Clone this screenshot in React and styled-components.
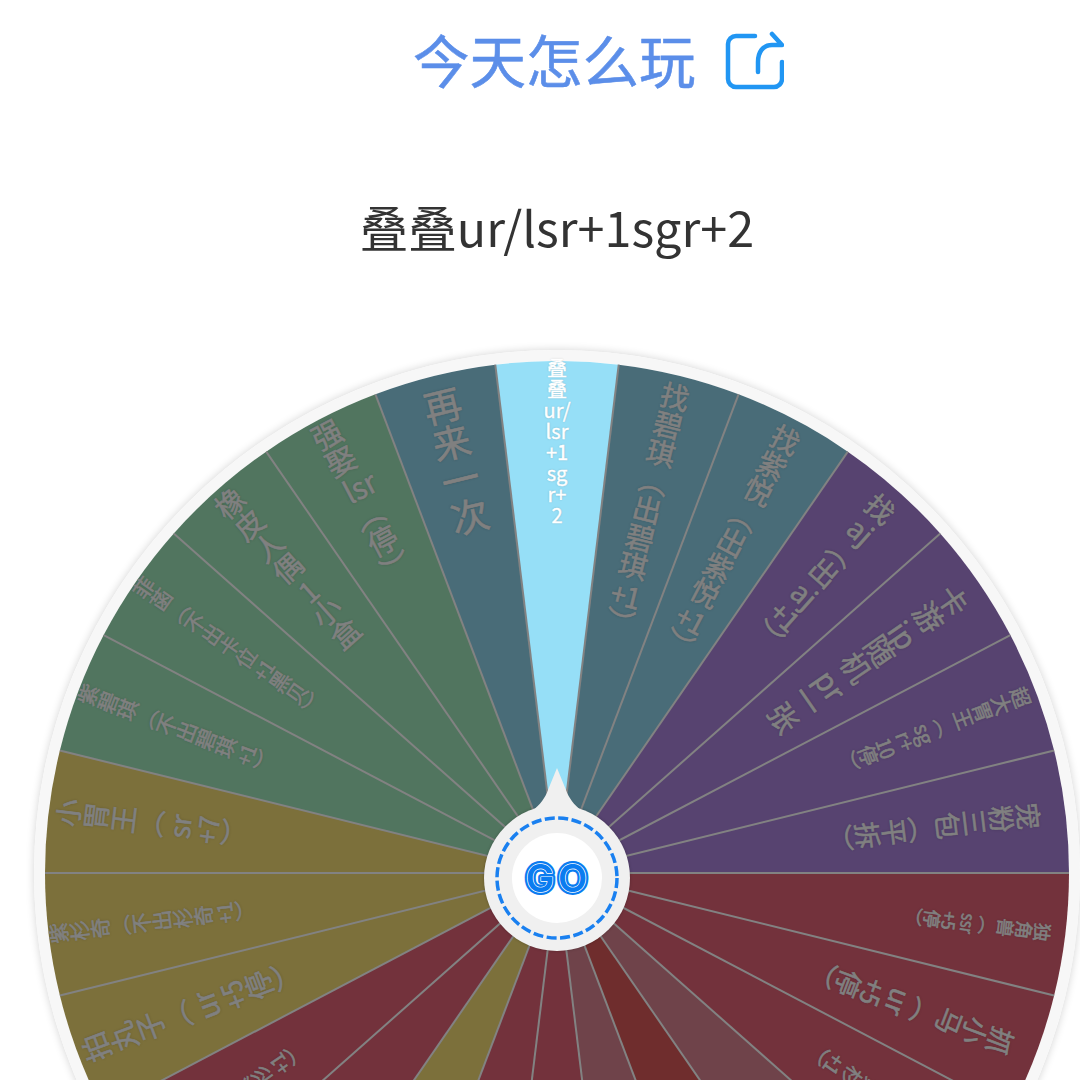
import React from 'react'
import styled, {createGlobalStyle} from 'styled-components'

const R = 512;

const PURPLE = '#574370';
const TEAL = '#496c78';
const GREEN = '#51755f';
const OLIVE = '#7c703b';
const RED = '#73323c';
const ROSE = '#6f434a';
const BRICK = '#6f2d2d';

// clockwise from the top, slice 0 is the one the pointer is on
// {..} in a text is a latin group that stands upright in the column
const slices = [
  {color: '#96dff7', text: '叠\n叠\nur/\nlsr\n+1\nsg\nr+\n2', size: 20, inset: -4},
  {color: TEAL, text: '找碧琪（出碧琪{+1}）', size: 29, inset: 7},
  {color: TEAL, text: '找紫悦（出紫悦{+1}）', size: 28.8, inset: 8},
  {color: PURPLE, text: '找{aj}（出{aj}{+1}）', size: 28.3, inset: 11},
  {color: PURPLE, text: '卡游{ip}随机{pr}一张', size: 29.4, inset: 17},
  {color: PURPLE, text: '超大胃王（{sg}{r+}{10}停）', size: 20.4, inset: 6},
  {color: PURPLE, text: '宠粉三包（平拆）', size: 27, inset: 24},
  {color: RED, text: '独角兽（{ssr}{+5}停）', size: 18.5, inset: 14},
  {color: RED, text: '抓小马（{ur}{+5}停）', size: 27, inset: 25},
  {color: RED, text: '找紫杉（不出紫杉{+1}）', size: 20.5, inset: 0},
  {color: ROSE},
  {color: BRICK},
  {color: ROSE},
  {color: RED},
  {color: RED},
  {color: OLIVE},
  {color: RED},
  {color: RED, text: '找紫杉（不出紫杉{+1}）', size: 20.5, inset: 0},
  {color: OLIVE, text: '拍丸子（{ur}{+5}停）', size: 29, inset: 5},
  {color: OLIVE, text: '紫杉奇（不出杉奇{+1}）', size: 20.8, inset: 0},
  {color: OLIVE, text: '小胃王（{sr}{+7}）', size: 27.8, inset: 6},
  {color: GREEN, text: '紫碧琪（不出碧琪{+1}）', size: 21, inset: 0},
  {color: GREEN, text: '菲菡（不出卡位{+1}黑贝）', size: 20.6, inset: 0},
  {color: GREEN, text: '橡皮人偶{1}小盒', size: 29, inset: 4},
  {color: GREEN, text: '强娶{lsr}（停）', size: 30, inset: 2},
  {color: TEAL, text: '再来一次', size: 38, inset: 12},
];

const STEP = 360 / slices.length;

const GlobalStyle = createGlobalStyle`
  html, body {
    margin: 0;
    height: 100%;
    overflow: hidden;
    background-color: white;
  }
`;

const StyledPage = styled.div`
  width: 1114px;
  height: 1080px;
  overflow: hidden;
  display: flex;
  flex-direction: column;
  font-family: "Noto Sans CJK SC", "Noto Sans", sans-serif;
`;

const StyledHeader = styled.div`
  display: flex;
  align-items: center;
  gap: 28px;
  padding: 18px 0 0 413px;
`;

const StyledHeading = styled.h1`
  margin: 0;
  padding-bottom: 4px;
  font-size: 56.5px;
  line-height: 80px;
  font-weight: 400;
  color: #5b8ee9;
  -webkit-text-stroke: 0.6px #5b8ee9;
`;

const StyledTitle = styled.div`
  margin-top: 92px;
  text-align: center;
  font-size: 48.5px;
  line-height: 64px;
  color: #333;
`;

const StyledWheel = styled.div`
  position: relative;
  flex: none;
  width: 1024px;
  height: 1024px;
  margin: 92px 0 0 34px;
  border: 11px solid #f7f7f7;
  border-radius: 50%;
  box-shadow: 0 0 8px rgba(0, 0, 0, 0.18);
`;

const StyledDisc = styled.svg`
  display: block;
  width: 1024px;
  height: 1024px;
`;

const StyledLabel = styled.div`
  position: absolute;
  left: 50%;
  top: ${props => props.$inset}px;
  transform: translateX(-50%) rotate(${props => props.$angle}deg);
  transform-origin: 50% ${props => R - props.$inset}px;
  font-size: ${props => props.$size}px;
  line-height: 1;
  white-space: nowrap;
  color: #808080;
  -webkit-text-stroke: 0.6px #808080;
  text-shadow: 0 0 3px rgba(0, 0, 0, 0.2);
  writing-mode: vertical-rl;
`;

const StyledUpright = styled.span`
  text-combine-upright: all;
`;

const StyledActiveLabel = styled(StyledLabel)`
  writing-mode: horizontal-tb;
  white-space: pre-line;
  text-align: center;
  line-height: 21px;
  color: white;
  -webkit-text-stroke: 0.4px white;
  text-shadow: 0 0 2px rgba(0, 0, 0, 0.25);
`;

const StyledPointer = styled.svg`
  position: absolute;
  left: 482px;
  top: 407px;
  width: 60px;
  height: 48px;
`;

const StyledHub = styled.div`
  position: absolute;
  left: 439px;
  top: 444px;
  width: 146px;
  height: 146px;
  display: flex;
  align-items: center;
  justify-content: center;
  border-radius: 50%;
  background-color: #f0f0f0;
  box-shadow: 0 0 3px rgba(0, 0, 0, 0.25);
`;

const StyledDashes = styled.svg`
  position: absolute;
  inset: 0;
  width: 146px;
  height: 146px;
`;

const StyledGoButton = styled.div`
  position: relative;
  width: 90px;
  height: 90px;
  border-radius: 50%;
  background-color: white;
  display: flex;
  align-items: center;
  justify-content: center;
`;

const StyledGo = styled.svg`
  display: block;
  width: 80px;
  height: 44px;
  font-family: Inter, "Liberation Sans", sans-serif;
  font-size: 38px;
  font-weight: 600;
`;

const slicePath = (index) => {
  const from = (index - 0.5) * STEP * Math.PI / 180;
  const to = (index + 0.5) * STEP * Math.PI / 180;
  const point = a => `${R + R * Math.sin(a)} ${R - R * Math.cos(a)}`;
  return `M${R} ${R}L${point(from)}A${R} ${R} 0 0 1 ${point(to)}Z`;
};

const spokeEnd = (index) => {
  const a = (index - 0.5) * STEP * Math.PI / 180;
  return {x2: R + R * Math.sin(a), y2: R - R * Math.cos(a)};
};

const labelParts = (text) => text.split(/\{(.+?)\}/).map((part, i) => (
  i % 2 ? <StyledUpright key={i}>{part}</StyledUpright> : part
));

const ShareIcon = () => (
  <svg width="60" height="60" viewBox="0 0 60 60" fill="none" stroke="#2196f3" strokeWidth="4.5" strokeLinecap="round" strokeLinejoin="round">
    <path d="M31 6H12a8 8 0 0 0-8 8v35a8 8 0 0 0 8 8h38a8 8 0 0 0 8-8V32"/>
    <path d="M34 42V32c0-10 5-17 14-17h10L48 4"/>
  </svg>
);

const App = () => (
  <StyledPage>
    <GlobalStyle/>
    <StyledHeader>
      <StyledHeading>今天怎么玩</StyledHeading>
      <ShareIcon/>
    </StyledHeader>
    <StyledTitle>叠叠ur/lsr+1sgr+2</StyledTitle>
    <StyledWheel>
      <StyledDisc viewBox="0 0 1024 1024">
        {slices.map((slice, i) => (
          <path key={i} d={slicePath(i)} fill={slice.color}/>
        ))}
        {slices.map((slice, i) => (
          <line key={i} x1={R} y1={R} {...spokeEnd(i)} stroke="#828282" strokeWidth="2"/>
        ))}
      </StyledDisc>
      {slices.map((slice, i) => {
        if (!slice.text) return null;
        const Label = i === 0 ? StyledActiveLabel : StyledLabel;
        return (
          <Label key={i} $angle={i * STEP} $size={slice.size} $inset={slice.inset}>
            {labelParts(slice.text)}
          </Label>
        );
      })}
      <StyledHub>
        <StyledDashes viewBox="0 0 146 146">
          <circle cx="73" cy="73" r="60" fill="none" stroke="#1a80f0" strokeWidth="3.5" strokeDasharray="10 3.5"/>
        </StyledDashes>
        <StyledGoButton>
          <StyledGo viewBox="0 0 80 44">
            <defs>
              <text id="go-word" x="41.5" y="36" textAnchor="middle" letterSpacing="4">GO</text>
            </defs>
            <use href="#go-word" fill="#0a7cf0" stroke="#0a7cf0" strokeWidth="6" strokeLinejoin="round"/>
            <use href="#go-word" fill="white" stroke="white" strokeWidth="1.4" strokeLinejoin="round"/>
            <use href="#go-word" fill="#0a7cf0"/>
          </StyledGo>
        </StyledGoButton>
      </StyledHub>
      <StyledPointer viewBox="0 0 60 48">
        <path d="M30 0L21 22C18 30 14 36 4 44L4 48L56 48L56 44C46 36 42 30 39 22Z" fill="#f0f0f0"/>
      </StyledPointer>
    </StyledWheel>
  </StyledPage>
);

export default App;
